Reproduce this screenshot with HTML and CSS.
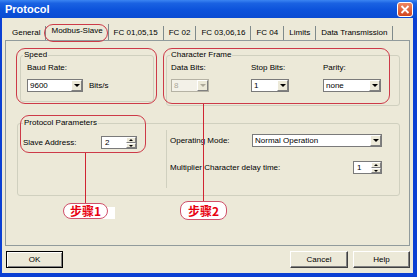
FILE: index.html
```html
<!DOCTYPE html>
<html lang="en">
<head>
  <meta charset="UTF-8" />
  <title>Protocol</title>
  <link rel="stylesheet" href="styles.css">
</head>
<body>
  <div class="window">
    <div class="titlebar">
      <span class="title">Protocol</span>
      <svg class="close" width="16" height="15" viewBox="0 0 16 15">
        <defs>
          <linearGradient id="cg" x1="0" y1="0" x2="0" y2="1">
            <stop offset="0" stop-color="#f08a64"/>
            <stop offset="1" stop-color="#d0431c"/>
          </linearGradient>
        </defs>
        <rect x="0.5" y="0.5" width="15" height="14" rx="2.5" fill="url(#cg)" stroke="#fff"/>
        <path d="M4.5 4 L11.5 11 M11.5 4 L4.5 11" stroke="#fff" stroke-width="1.8"/>
      </svg>
    </div>

    <div class="client">
      <div class="tabs">
        <div class="tab">General</div>
        <div class="tab active">Modbus-Slave</div>
        <div class="tab">FC 01,05,15</div>
        <div class="tab">FC 02</div>
        <div class="tab">FC 03,06,16</div>
        <div class="tab">FC 04</div>
        <div class="tab">Limits</div>
        <div class="tab">Data Transmission</div>
      </div>

      <div class="panel">
        <div class="top-row">
          <fieldset class="group speed">
            <legend>Speed</legend>
            <div class="label">Baud Rate:</div>
            <div class="inline-row">
              <div class="combo baud"><span class="value">9600</span><span class="drop"></span></div>
              <span class="unit">Bits/s</span>
            </div>
          </fieldset>

          <fieldset class="group frame">
            <legend>Character Frame</legend>
            <div class="frame-grid">
              <div>
                <div class="label">Data Bits:</div>
                <div class="combo small disabled"><span class="value">8</span><span class="drop"></span></div>
              </div>
              <div>
                <div class="label">Stop Bits:</div>
                <div class="combo small"><span class="value">1</span><span class="drop"></span></div>
              </div>
              <div>
                <div class="label">Parity:</div>
                <div class="combo parity"><span class="value">none</span><span class="drop"></span></div>
              </div>
            </div>
          </fieldset>
        </div>

        <fieldset class="group params">
          <legend>Protocol Parameters</legend>
          <div class="params-cols">
            <div class="params-left">
              <div class="param-row">
                <span class="slave-label">Slave Address:</span>
                <div class="spin slave"><span class="value">2</span><span class="arrows"><i class="up"></i><i class="down"></i></span></div>
              </div>
            </div>
            <div class="params-right">
              <div class="param-row">
                <span class="mode-label">Operating Mode:</span>
                <div class="combo mode"><span class="value">Normal Operation</span><span class="drop"></span></div>
              </div>
              <div class="param-row second">
                <span class="delay-label">Multiplier Character delay time:</span>
                <div class="spin delay"><span class="value">1</span><span class="arrows"><i class="up"></i><i class="down"></i></span></div>
              </div>
            </div>
          </div>
        </fieldset>
      </div>

      <div class="buttons">
        <div class="btn default">OK</div>
        <div class="btn cancel">Cancel</div>
        <div class="btn">Help</div>
      </div>
    </div>

    <!-- red annotations drawn over the dialog -->
    <div class="oval oval-tab"></div>
    <div class="oval oval-speed"></div>
    <div class="oval oval-frame"></div>
    <div class="oval oval-params"></div>
    <div class="pointer pointer-1"></div>
    <div class="pointer pointer-2"></div>
    <div class="step-pad"></div>
    <div class="step step-1">步骤1</div>
    <div class="step step-2">步骤2</div>
  </div>
</body>
</html>
```

FILE: styles.css
```css
* {
  box-sizing: border-box;
}
body {
  margin: 0;
  font-family: "Liberation Sans", Arial, sans-serif;
  font-size: 8px;
  line-height: 10px;
  color: #000;
  background: #ece9d8;
}
.window {
  position: relative;
  width: 417px;
  height: 277px;
  overflow: hidden;
}

/* title bar */
.titlebar {
  display: flex;
  justify-content: space-between;
  align-items: flex-start;
  height: 18px;
  padding: 0 4px 0 5px;
  background: linear-gradient(#3b85f2 0%, #1a62e2 18%, #0c52db 55%, #0a4bd2 100%);
}
.title {
  color: #fff;
  font-size: 11px;
  font-weight: bold;
  line-height: 18px;
}
.close {
  display: block;
  margin-top: 2px;
}

.client {
  height: 259px;
  border: solid #0b3fd3;
  border-width: 0 4px 4px 2px;
  padding-top: 6px;
  background: #ece9d8;
}

/* tabs */
.tabs {
  display: flex;
  align-items: flex-end;
  height: 16px;
  margin-left: 5px;
}
.tab {
  height: 14px;
  line-height: 14px;
  padding: 0 5px;
  border-right: 1px solid #7f8a8b;
  white-space: nowrap;
}
.tab.active {
  height: 16px;
  padding-bottom: 2px;
}

.panel {
  height: 206px;
  margin: 0 3px;
  border: 1px solid #919b9c;
  padding: 9px 9px 0 11px;
}

/* group boxes */
.group {
  margin: 0;
  min-width: 0;
  border: 1px solid #d0d0bf;
  border-radius: 3px;
}
legend {
  padding: 0 1px;
  line-height: 10px;
}
.top-row {
  display: flex;
  align-items: flex-start;
  gap: 12px;
  margin-left: 3px;
}
.speed {
  width: 134px;
  padding: 3px 6px 9px;
}
.speed legend {
  margin-left: -4px;
}
.frame {
  width: 234px;
  padding: 3px 4px 13px;
}
.frame legend {
  margin-left: -1px;
}
.frame-grid {
  display: grid;
  grid-template-columns: 80px 72px 58px;
}
.label {
  height: 10px;
  margin-bottom: 6px;
}
.inline-row {
  display: flex;
  align-items: center;
}
.unit {
  margin-left: 6px;
}

/* combo boxes */
.combo {
  display: flex;
  height: 13px;
  border: 1px solid #7a7a7a;
  background: #fff;
}
.combo .value {
  flex: 1;
  padding-left: 2px;
  line-height: 11px;
  white-space: nowrap;
}
.drop {
  position: relative;
  width: 11px;
  border: 1px solid;
  border-color: #fff #808080 #808080 #fff;
  background: #ece9d8;
}
.drop::after {
  content: "";
  position: absolute;
  left: 2px;
  top: 3px;
  border: 3px solid transparent;
  border-top: 3px solid #000;
  border-bottom: 0;
}
.combo.baud {
  width: 56px;
}
.combo.small {
  width: 38px;
}
.combo.parity {
  width: 58px;
}
.combo.disabled {
  border-color: #b5b2a4;
  background: #f3f1e8;
  color: #aca899;
}
.combo.disabled .drop::after {
  border-top-color: #aca899;
}

/* protocol parameters */
.params {
  width: 383px;
  margin-top: 12px;
  padding: 0 0 7px;
}
.params legend {
  margin-left: 5px;
}
.params-cols {
  display: flex;
}
.params-left {
  width: 148px;
  padding: 8px 0 0 5px;
}
.params-right {
  flex: 1;
  margin-top: 2px;
  border-left: 1px solid #d0d0bf;
  padding: 4px 16px 14px 3px;
}
.param-row {
  display: flex;
  align-items: center;
}
.param-row.second {
  margin-top: 14px;
}
.slave-label {
  width: 78px;
}
.mode-label {
  width: 82px;
}
.delay-label {
  width: 183px;
}
.combo.mode {
  width: 130px;
}

/* spinners */
.spin {
  display: flex;
  height: 13px;
  border: 1px solid #7a7a7a;
  background: #fff;
}
.spin .value {
  flex: 1;
  padding-left: 3px;
  line-height: 11px;
}
.spin.slave {
  width: 36px;
}
.spin.delay {
  width: 29px;
}
.arrows {
  display: flex;
  flex-direction: column;
  width: 10px;
}
.arrows i {
  position: relative;
  flex: 1;
  border: 1px solid;
  border-color: #fff #808080 #808080 #fff;
  background: #ece9d8;
}
.arrows i::after {
  content: "";
  position: absolute;
  left: 2px;
  top: 1px;
  border: 2px solid transparent;
}
.arrows .up::after {
  border-top: 0;
  border-bottom: 2px solid #000;
}
.arrows .down::after {
  border-bottom: 0;
  border-top: 2px solid #000;
}

/* dialog buttons */
.buttons {
  display: flex;
  gap: 5px;
  margin: 5px 3px 0 4px;
}
.btn {
  width: 57px;
  height: 17px;
  line-height: 15px;
  text-align: center;
  border: 1px solid;
  border-color: #fff #404040 #404040 #fff;
  box-shadow: inset -1px -1px 0 #808080;
}
.btn.default {
  border: 1px solid #000;
  box-shadow: inset 1px 1px 0 #fff, inset -1px -1px 0 #808080;
}
.btn.cancel {
  width: 58px;
  margin-left: auto;
}

/* annotations */
.oval {
  position: absolute;
  border: 1.5px solid #cd3a48;
  border-radius: 9px;
}
.oval-tab {
  left: 44px;
  top: 24px;
  width: 64px;
  height: 18px;
}
.oval-speed {
  left: 16px;
  top: 48px;
  width: 141px;
  height: 56px;
}
.oval-frame {
  left: 163px;
  top: 48px;
  width: 227px;
  height: 56px;
}
.oval-params {
  left: 20px;
  top: 115px;
  width: 126px;
  height: 38px;
}
.pointer {
  position: absolute;
  width: 1px;
  background: #d02432;
}
.pointer-1 {
  left: 85px;
  top: 153px;
  height: 50px;
}
.pointer-2 {
  left: 203px;
  top: 104px;
  height: 97px;
}
.step-pad {
  position: absolute;
  left: 100px;
  top: 207px;
  width: 15px;
  height: 12px;
  background: #fff;
}
.step {
  position: absolute;
  border: 1px solid #d0506a;
  border-radius: 8px;
  background: #fff;
  color: #e8000f;
  font-family: "Noto Sans CJK SC", "Liberation Sans", sans-serif;
  font-weight: bold;
  font-size: 12px;
  text-align: center;
}
.step-1 {
  left: 63px;
  top: 203px;
  width: 45px;
  height: 16px;
  line-height: 14px;
}
.step-2 {
  left: 180px;
  top: 201px;
  width: 47px;
  height: 19px;
  line-height: 17px;
}
```
